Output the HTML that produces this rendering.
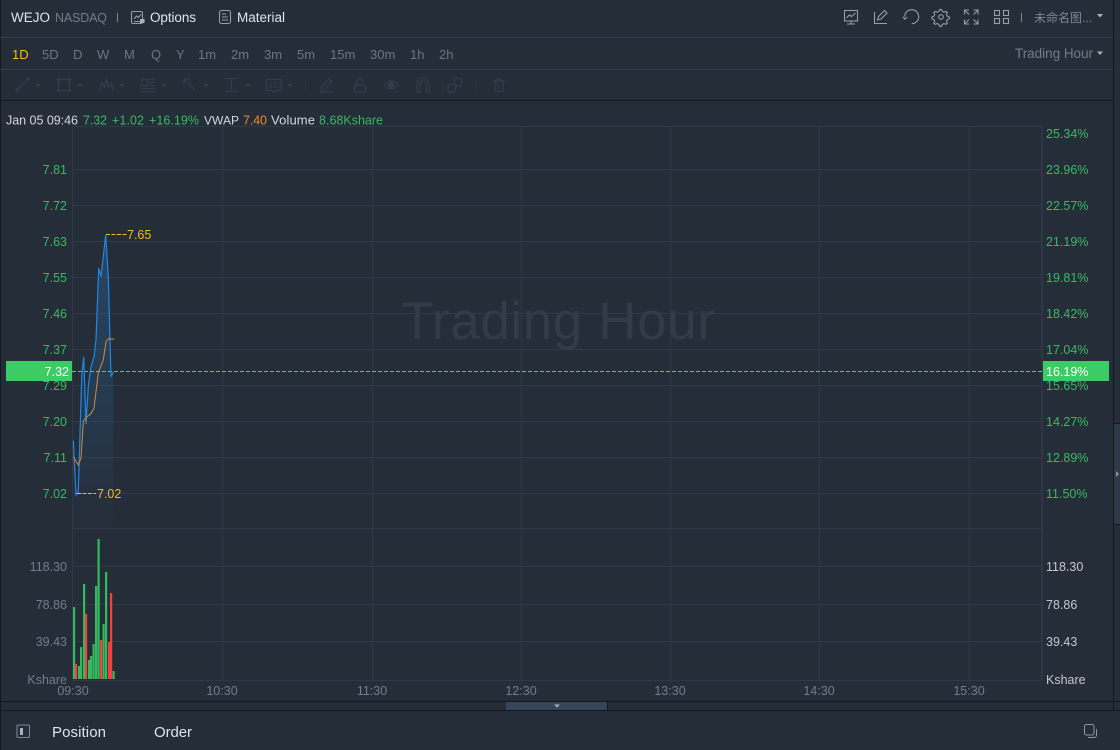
<!DOCTYPE html>
<html><head><meta charset="utf-8">
<style>
html,body{margin:0;padding:0;width:1120px;height:750px;overflow:hidden;background:#252d38}
svg{display:block}
text{font-family:"Liberation Sans","Noto Sans CJK SC",sans-serif;font-size:12.5px}
.g{fill:#37ba65}.a{fill:#727d8b}.t text{fill:#6a7685;font-size:13px}.y{fill:#f2bd1d}
.gl{stroke:#2f3a46;stroke-width:1;fill:none}
.ic{stroke:#959ea9;stroke-width:1.1;fill:none}
.d{stroke:#343e4a;stroke-width:1.2;fill:none}
.f13 text,text.f13{font-size:13px}
</style></head><body>
<svg width="1120" height="750" viewBox="0 0 1120 750" xmlns="http://www.w3.org/2000/svg">
<defs><linearGradient id="f" x1="0" y1="0" x2="0" y2="1"><stop offset="0" stop-color="#2a6ba5" stop-opacity=".42"/><stop offset=".75" stop-color="#2a6ba5" stop-opacity=".12"/><stop offset="1" stop-color="#2a6ba5" stop-opacity="0"/></linearGradient></defs>
<rect width="1120" height="750" fill="#252d38"/>
<!-- frame -->
<rect x="0" y="0" width="1" height="750" fill="#14181e"/>
<rect x="1113" y="0" width="1" height="710" fill="#14181e"/>
<rect x="1114" y="424" width="6" height="100" fill="#2e394a"/>
<rect x="1114" y="423" width="6" height="1" fill="#14181e"/><rect x="1114" y="524" width="6" height="1" fill="#14181e"/>
<path d="M1116 471l3 3-3 3z" fill="#8b95a3"/>
<path d="M0 37.500H1113M0 69.500H1113" stroke="#323b47"/>
<path d="M0 100.500H1113" stroke="#14181e"/>
<!-- header -->
<text x="11" y="22" style="font-size:13.500px" fill="#dfe4ea" textLength="39">WEJO</text>
<text x="55" y="22" class="a" textLength="52">NASDAQ</text>
<path d="M117.500 13V22" stroke="#7c8794"/>
<g class="ic"><rect x="131.500" y="11.500" width="11" height="12" rx="1.500"/><path d="M134 19l2.500-3 2 1.500 2.500-3M134 21.500h6"/><rect x="140" y="19" width="4.500" height="4" fill="#a9b1bb" stroke="none"/></g>
<text x="150" y="22" fill="#dfe4ea" style="font-size:13.500px" textLength="46">Options</text>
<g class="ic"><rect x="219.500" y="10.500" width="11" height="13" rx="2"/><path d="M222 14h4M222 17h6M222 20h6"/></g>
<text x="237" y="22" fill="#dfe4ea" style="font-size:13.500px" textLength="48">Material</text>
<!-- right icons -->
<g class="ic">
<rect x="844.500" y="10.500" width="13" height="10.500"/><path d="M846.500 18l3-3 2 1.500 4-3.500M851 21v3M847 24h8"/>
<path d="M874.500 12v11.500h12.500M877.500 20l1-3.500 6-6 2.500 2.500-6 6z"/>
<path d="M904.700 16.700A7 7 0 1 1 911.700 23.700M903 16.700l1.700 2.500 2.500-2"/>
<path d="M939.500 9.500l1.500 0 .8 2 1.800.8 2-.8 1.200 1.300-.8 2 .8 1.700 2 .8v1.800l-2 .8-.8 1.800.8 2-1.200 1.200-2-.8-1.800.8-.8 2h-1.800l-.8-2-1.800-.8-2 .8-1.200-1.200.8-2-.8-1.800-2-.8v-1.800l2-.8.8-1.700-.8-2 1.200-1.300 2 .8 1.800-.8z" transform="translate(.5 .2) scale(1 .97)"/><circle cx="941" cy="17" r="2.300"/>
<path d="M964.500 14.500v-4.500h4.500M964.500 10l4.500 4.500M978 14.500v-4.500h-4.500M978 10l-4.500 4.500M964.500 19.500v4.500h4.500M964.500 24l4.500-4.500M978 19.500v4.500h-4.500M978 24l-4.500-4.500"/>
<rect x="994.500" y="10.500" width="5" height="5"/><rect x="1003.500" y="10.500" width="5" height="5"/><rect x="994.500" y="18.500" width="5" height="5"/><rect x="1003.500" y="18.500" width="5" height="5"/>
</g>
<path d="M1021.500 13V22" stroke="#7c8794"/>
<text x="1034" y="22" fill="#7d8896" style="font-size:12px" textLength="58">未命名图...</text>
<path d="M1097 14h6l-3 3.500z" fill="#a9b1bb"/>
<!-- timeframes -->
<g class="t">
<text x="12" y="59" style="fill:#f2bd1d">1D</text>
<text x="42" y="59">5D</text><text x="73" y="59">D</text><text x="97" y="59">W</text><text x="124" y="59">M</text><text x="151" y="59">Q</text><text x="176" y="59">Y</text>
<text x="198" y="59">1m</text><text x="231" y="59">2m</text><text x="264" y="59">3m</text><text x="297" y="59">5m</text><text x="330" y="59">15m</text><text x="370" y="59">30m</text><text x="410" y="59">1h</text><text x="439" y="59">2h</text>
</g>
<text x="1015" y="58" fill="#717d8b" style="font-size:13.500px" textLength="78">Trading Hour</text>
<path d="M1097 51.500h6l-3 3.500z" fill="#a9b1bb"/>
<!-- draw toolbar -->
<g class="d">
<path d="M17 90L28 79"/><circle cx="17" cy="90" r="1" fill="#343e4a"/><circle cx="28" cy="79" r="1" fill="#343e4a"/>
<rect x="58.500" y="79.500" width="11" height="11"/><circle cx="58.500" cy="79.500" r="1" fill="#343e4a"/><circle cx="69.500" cy="79.500" r="1" fill="#343e4a"/><circle cx="58.500" cy="90.500" r="1" fill="#343e4a"/><circle cx="69.500" cy="90.500" r="1" fill="#343e4a"/>
<path d="M99.500 90l2.500-7 2.500 4 2-7 2.500 7 2.500-4 1.500 7"/>
<path d="M149 79.500h6M149 82.500h6M149 85.500h6M141 88.500h14M141 91.500h14"/><rect x="141.500" y="79.500" width="6" height="6"/>
<path d="M184 79l11 11M184 79v6M184 79h6"/>
<path d="M225 78.500h13M225 91.500h13M231.500 80v10"/>
<path d="M267.500 79.500h15v11h-5.500l-2 2-2-2h-5.500z" transform="translate(-1 0)"/>
<path d="M321 91l1-4 7-8 3 2.500-7 8zM321 92.500c3-1.500 6 0 12-.5"/>
<rect x="354.500" y="85" width="11" height="7" rx="2"/><path d="M356.500 85v-2.500a3.500 3.500 0 0 1 7 0"/>
<path d="M384 85c4-5.500 10-5.500 14 0c-4 5-10 5-14 0z"/><circle cx="391" cy="85" r="2.500" fill="#343e4a"/>
<path d="M417 92v-8a6 6 0 0 1 12 0v8h-3v-8a3 3 0 0 0-6 0v8z"/>
<rect x="448" y="84.500" width="7.500" height="7.500" rx="1.500"/><rect x="454" y="78.500" width="7.500" height="7.500" rx="1.500"/>
<path d="M492 81h13M495 81v10.500h8V81M496.500 81v-2h4v2M498 84v5"/>
</g>
<text x="268.500" y="88" fill="#343e4a" style="font-size:8.500px">123</text>
<path d="M35 84h6l-3 3zM77 84h6l-3 3zM119 84h6l-3 3zM161 84h6l-3 3zM203 84h6l-3 3zM245 84h6l-3 3zM287 84h6l-3 3z" fill="#343e4a"/>
<path d="M305.500 79v12M476.500 79v12" stroke="#2b333e"/>
<!-- info line -->
<text x="6" y="124.500" fill="#d4d8dd" textLength="72">Jan 05 09:46</text>
<text x="83" y="124.500" class="g" textLength="24">7.32</text>
<text x="112" y="124.500" class="g" textLength="32">+1.02</text>
<text x="149" y="124.500" class="g" textLength="50">+16.19%</text>
<text x="204" y="124.500" fill="#d4d8dd" style="font-size:12px" textLength="35">VWAP</text>
<text x="243" y="124.500" fill="#ef8a25" textLength="24">7.40</text>
<text x="271" y="124.500" fill="#d4d8dd" class="f13" textLength="44">Volume</text>
<text x="319" y="124.500" class="g" textLength="64">8.68Kshare</text>
<!-- grid -->
<path class="gl" d="M72 126.500H1042M72 169.500H1042M72 205.500H1042M72 241.500H1042M72 277.500H1042M72 313.500H1042M72 349.500H1042M72 385.500H1042M72 421.500H1042M72 457.500H1042M72 493.500H1042M72 528.500H1042M72 566.500H1042M72 604.500H1042M72 641.500H1042M72 680.500H1042"/>
<path class="gl" d="M72.500 126V680M222.500 126V680M372.500 126V680M521.500 126V680M670.500 126V680M819.500 126V680M969.500 126V680"/>
<rect x="1041" y="126" width="2" height="555" fill="#2c3845"/>
<!-- watermark -->
<text x="401" y="339" style="font-size:53px" fill="#323b47" textLength="314">Trading Hour</text>
<!-- area -->
<path d="M73.300 440.700L76 495L78.300 491.700L81.700 376.700L83.700 356.700L86 424L88.300 386.700L90.700 368L94 356.700L96 340L98.700 268.300L101 276.700L105.700 235L108.300 276.700L111 376.700L113.300 371.700V530H73.300Z" fill="url(#f)"/>
<!-- price line -->
<path d="M72 371.500H1042" stroke="#7fb092" stroke-dasharray="4 2"/>
<rect x="6" y="361" width="66" height="20" fill="#3dcb66"/>
<rect x="1043" y="361" width="66" height="20" fill="#3dcb66"/>
<!-- left labels -->
<g class="g" text-anchor="end">
<text x="67" y="174">7.81</text><text x="67" y="210">7.72</text><text x="67" y="246">7.63</text><text x="67" y="282">7.55</text><text x="67" y="318">7.46</text><text x="67" y="354">7.37</text><text x="67" y="390">7.29</text><text x="67" y="426">7.20</text><text x="67" y="462">7.11</text><text x="67" y="498">7.02</text>
</g>
<text x="69" y="376" text-anchor="end" fill="#fff">7.32</text>
<g class="a" text-anchor="end">
<text x="67" y="571">118.30</text><text x="67" y="609">78.86</text><text x="67" y="646">39.43</text><text x="67" y="684">Kshare</text>
</g>
<!-- right labels -->
<g class="g">
<text x="1046" y="138">25.34%</text><text x="1046" y="174">23.96%</text><text x="1046" y="210">22.57%</text><text x="1046" y="246">21.19%</text><text x="1046" y="282">19.81%</text><text x="1046" y="318">18.42%</text><text x="1046" y="354">17.04%</text><text x="1046" y="390">15.65%</text><text x="1046" y="426">14.27%</text><text x="1046" y="462">12.89%</text><text x="1046" y="498">11.50%</text>
</g>
<text x="1046" y="376" fill="#fff">16.19%</text>
<g fill="#c3c8ce">
<text x="1046" y="571">118.30</text><text x="1046" y="609">78.86</text><text x="1046" y="646">39.43</text><text x="1046" y="684">Kshare</text>
</g>
<!-- x labels -->
<g class="a" text-anchor="middle">
<text x="73" y="695">09:30</text><text x="222" y="695">10:30</text><text x="372" y="695">11:30</text><text x="521" y="695">12:30</text><text x="670" y="695">13:30</text><text x="819" y="695">14:30</text><text x="969" y="695">15:30</text>
</g>
<!-- lines -->
<path d="M73.300 440.700L76 495L78.300 491.700L81.700 376.700L83.700 356.700L86 424L88.300 386.700L90.700 368L94 356.700L96 340L98.700 268.300L101 276.700L105.700 235L108.300 276.700L111 376.700L113.300 371.700" fill="none" stroke="#2287e0" stroke-width="1.200"/>
<path d="M73.300 456.700L78.300 465L81 458L83.300 421.700L86 417.300L90.700 414L94 408L98.300 373L103.300 360L106 341.700L108.700 338.700L114 339.300" fill="none" stroke="#d98a35" stroke-width="1"/>
<path d="M106 234.500H127M77 493.500H96" stroke="#f2bd1d" stroke-dasharray="4 1.500"/>
<text x="127" y="239" class="y">7.65</text>
<text x="97" y="498" class="y">7.02</text>
<!-- volume -->
<g fill="#35b95f">
<rect x="73" y="607" width="2.200" height="72"/><rect x="78" y="666" width="2.200" height="13"/><rect x="80" y="647" width="2.200" height="32"/><rect x="83" y="584" width="2.200" height="95"/><rect x="88" y="660" width="2.200" height="19"/><rect x="90" y="656" width="2.200" height="23"/><rect x="92.500" y="644" width="2.200" height="35"/><rect x="95" y="586" width="2.200" height="93"/><rect x="97.500" y="539" width="2.200" height="140"/><rect x="102.500" y="624" width="2.200" height="55"/><rect x="105" y="572" width="2.200" height="107"/><rect x="112.500" y="671" width="2.200" height="8"/>
</g>
<g fill="#f44040">
<rect x="75" y="664" width="2.200" height="15"/><rect x="85" y="614" width="2.200" height="65"/><rect x="100" y="640" width="2.200" height="39"/><rect x="108" y="642" width="2.200" height="37"/><rect x="110" y="593" width="2.200" height="86"/>
</g>
<!-- bottom -->
<path d="M0 701.500H1120M0 710.500H1120" stroke="#14181e"/>
<rect x="506" y="702" width="102" height="8" fill="#36465a"/>
<rect x="607" y="702" width="1" height="8" fill="#14181e"/>
<path d="M554 704.500h6l-3 3z" fill="#a9b1bb"/>
<rect x="17" y="725" width="12.500" height="12.500" rx="1.500" fill="none" stroke="#7d8794" stroke-width="1.100"/>
<rect x="20" y="728" width="3" height="7" fill="#a9b1bb"/>
<text x="52" y="737" fill="#dfe4ea" style="font-size:15px" textLength="54">Position</text>
<text x="154" y="737" fill="#dfe4ea" style="font-size:15px" textLength="38">Order</text>
<rect x="1084.500" y="724.500" width="9.500" height="10.500" rx="2" fill="none" stroke="#8d96a2"/>
<path d="M1096.500 729v6a2.500 2.500 0 0 1-2.500 2.500h-6" fill="none" stroke="#8d96a2"/>
</svg>
</body></html>
